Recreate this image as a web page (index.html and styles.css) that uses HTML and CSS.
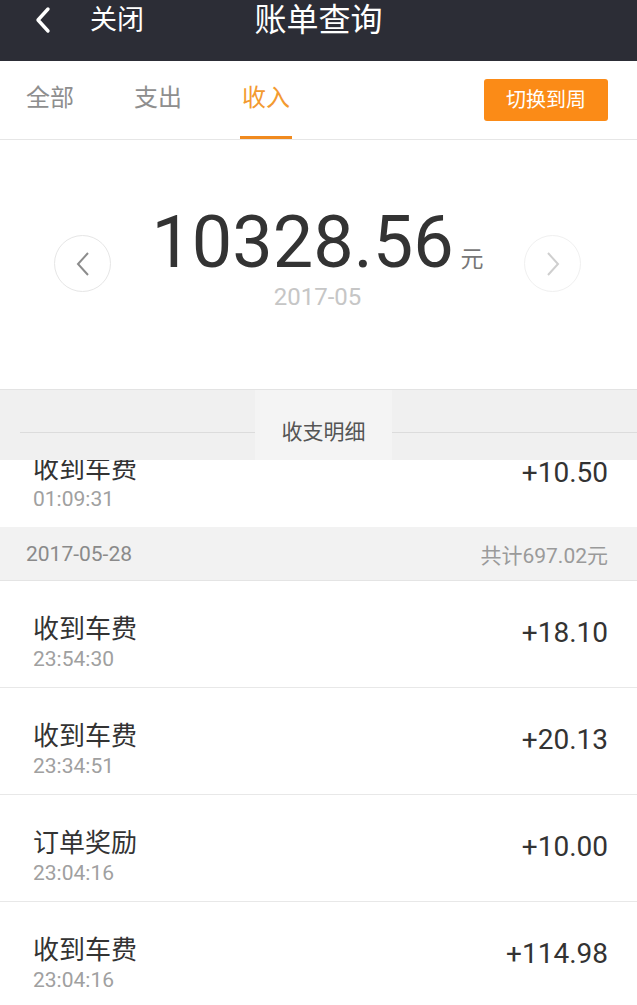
FILE: index.html
```html
<!DOCTYPE html>
<html lang="zh-CN">
<head>
    <meta charset="UTF-8">
    <meta name="viewport" content="width=device-width, initial-scale=1.0">
    <title>账单查询</title>
    <link rel="stylesheet" href="styles.css">
</head>
<body>

<div class="app">
    <!-- Top bar: back + title -->
    <div class="topbar">
        <div class="topbar-left">
            <svg class="back-icon" width="18" height="28" viewBox="0 0 18 28">
                <path d="M14 3 L4 14 L14 25" fill="none" stroke="#fff" stroke-width="3.4" stroke-linecap="round" stroke-linejoin="round"/>
            </svg>
            <span class="close-text">关闭</span>
        </div>
        <div class="topbar-title">账单查询</div>
        <div></div>
    </div>

    <!-- Filter tabs -->
    <div class="tabs">
        <div class="tab">全部</div>
        <div class="tab">支出</div>
        <div class="tab active">收入</div>
        <div class="switch-btn">切换到周</div>
    </div>

    <!-- Month total -->
    <div class="summary">
        <div class="circle-btn">
            <svg width="14" height="24" viewBox="0 0 14 24">
                <path d="M12 1 L2 12 L12 23" fill="none" stroke="#8c8c8c" stroke-width="2"/>
            </svg>
        </div>
        <div class="total">
            <div class="total-line">
                <span class="total-num">10328.56</span>
                <span class="total-unit">元</span>
            </div>
            <div class="total-month">2017-05</div>
        </div>
        <div class="circle-btn disabled">
            <svg width="14" height="24" viewBox="0 0 14 24">
                <path d="M2 1 L12 12 L2 23" fill="none" stroke="#cfcfcf" stroke-width="2"/>
            </svg>
        </div>
    </div>

    <div class="section-title">
        <div class="line left"></div>
        <div class="label">收支明细</div>
        <div class="line"></div>
    </div>

    <!-- Detail list (scrolled under the section title) -->
    <div class="list">
        <div class="row first">
            <div class="row-info">
                <div class="row-name">收到车费</div>
                <div class="row-time">01:09:31</div>
            </div>
            <div class="row-amount">+10.50</div>
        </div>

        <div class="day-head">
            <span>2017-05-28</span>
            <span class="day-sum">共计697.02元</span>
        </div>

        <div class="row">
            <div class="row-info">
                <div class="row-name">收到车费</div>
                <div class="row-time">23:54:30</div>
            </div>
            <div class="row-amount">+18.10</div>
        </div>
        <div class="row">
            <div class="row-info">
                <div class="row-name">收到车费</div>
                <div class="row-time">23:34:51</div>
            </div>
            <div class="row-amount">+20.13</div>
        </div>
        <div class="row">
            <div class="row-info">
                <div class="row-name">订单奖励</div>
                <div class="row-time">23:04:16</div>
            </div>
            <div class="row-amount">+10.00</div>
        </div>
        <div class="row">
            <div class="row-info">
                <div class="row-name">收到车费</div>
                <div class="row-time">23:04:16</div>
            </div>
            <div class="row-amount">+114.98</div>
        </div>
    </div>
</div>

</body>
</html>
```

FILE: styles.css
```css
body {
    margin: 0;
    background: #fff;
    font-family: Roboto, "Noto Sans CJK SC", sans-serif;
    color: #333;
}

.app {
    height: 100vh;
    display: flex;
    flex-direction: column;
}

/* Dark top bar */
.topbar {
    flex: 0 0 61px;
    background: #2c2d36;
    color: #fff;
    display: grid;
    grid-template-columns: 1fr auto 1fr;
    align-items: start;
}
.topbar-left {
    display: flex;
    align-items: center;
    height: 40px;
    padding-left: 34px;
}
.back-icon {
    margin-right: 38px;
}
.close-text {
    font-size: 27px;
    line-height: 40px;
}
.topbar-title {
    font-size: 32px;
    line-height: 40px;
}

/* Tabs */
.tabs {
    flex: 0 0 78px;
    display: flex;
    align-items: center;
    padding: 0 29px 0 24px;
    border-bottom: 1px solid #e6e6e6;
}
.tab {
    font-size: 24px;
    color: #8e8e8e;
    height: 75px;
    line-height: 75px;
    padding: 0 2px;
    margin-right: 56px;
    border-bottom: 3px solid transparent;
}
.tab.active {
    color: #f39a30;
    border-bottom-color: #f08a1e;
}
.switch-btn {
    margin-left: auto;
    width: 124px;
    height: 42px;
    line-height: 42px;
    text-align: center;
    background: #fb8b17;
    color: #fff;
    font-size: 20px;
    border-radius: 3px;
}

/* Month total */
.summary {
    flex: 0 0 249px;
    border-bottom: 1px solid #e3e3e3;
    display: flex;
    justify-content: space-between;
    align-items: flex-start;
    padding: 0 56px 0 54px;
}
.circle-btn {
    width: 55px;
    height: 55px;
    margin-top: 95px;
    border: 1px solid #e6e6e6;
    border-radius: 50%;
    display: flex;
    align-items: center;
    justify-content: center;
}
.circle-btn.disabled {
    border-color: #f0f0f0;
}
.total {
    margin-top: 63px;
    text-align: center;
}
.total-line {
    height: 80px;
    line-height: 80px;
}
.total-num {
    font-size: 72px;
    color: #333;
}
.total-unit {
    font-size: 23px;
    color: #777;
    margin-left: 3px;
}
.total-month {
    font-size: 24px;
    line-height: 28px;
    color: #c6c6c6;
}

/* Section divider */
.section-title {
    flex: 0 0 70px;
    background: #f0f0f0;
    display: flex;
}
.section-title .line {
    flex: 1;
    height: 1px;
    margin-top: 42px;
    background: #dcdcdc;
}
.section-title .line.left {
    flex: 0 0 235px;
    margin-left: 20px;
}
.section-title .label {
    width: 137px;
    padding-top: 14px;
    line-height: 56px;
    text-align: center;
    background: #f4f4f4;
    font-size: 21px;
    color: #555;
}

/* Detail rows */
.list {
    flex: 1;
    min-height: 0;
    overflow: hidden;
}
.row {
    height: 106px;
    border-bottom: 1px solid #e8e8e8;
    display: flex;
    justify-content: space-between;
    align-items: flex-start;
    padding: 0 29px 0 33px;
}
.row.first {
    margin-top: -39px;
    border-bottom: none;
}
.row-info {
    padding-top: 33px;
}
.row-name {
    font-size: 26px;
    line-height: 30px;
    color: #333;
}
.row-time {
    font-size: 21px;
    line-height: 31px;
    color: #a0a0a0;
}
.row-amount {
    padding-top: 33px;
    font-size: 28px;
    line-height: 37px;
    color: #333;
}

.day-head {
    height: 53px;
    background: #f2f2f2;
    border-bottom: 1px solid #e4e4e4;
    display: flex;
    justify-content: space-between;
    align-items: center;
    padding: 0 29px 0 26px;
    font-size: 21px;
    color: #8a8a8a;
}
.day-sum {
    color: #9a9a9a;
}
```
